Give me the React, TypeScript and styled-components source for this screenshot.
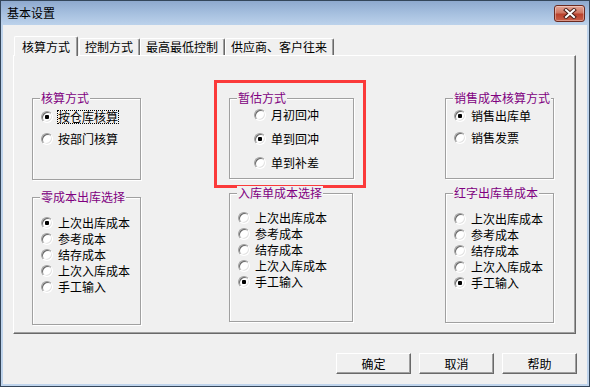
import React from 'react';
import styled, { createGlobalStyle } from 'styled-components';

interface Option {
  label: string;
  checked?: boolean;
  focused?: boolean;
}

interface GroupSpec {
  title: string;
  width: number;
  height: number;
  padLeft: number;
  top: number;
  gap: number;
  options: Option[];
}

const costOptions = (checked: number): Option[] =>
  ['上次出库成本', '参考成本', '结存成本', '上次入库成本', '手工输入'].map((label, i) => ({
    label,
    checked: i === checked,
  }));

const GlobalStyle = createGlobalStyle`
  html, body {
    margin: 0;
    padding: 0;
    background: #fff;
  }
  body {
    font-family: "Noto Sans CJK SC", "Noto Sans", sans-serif;
    font-size: 12px;
    color: #000;
  }
`;

const Window = styled.div`
  box-sizing: border-box;
  width: 590px;
  height: 387px;
  border: 1px solid #34465a;
  background: #bfd4ec;
  padding: 0 2px 2px 2px;
  display: flex;
  flex-direction: column;
`;

const TitleBar = styled.div`
  height: 24px;
  margin: 0 -2px;
  padding: 0 4px 0 6px;
  display: flex;
  align-items: flex-start;
  justify-content: space-between;
  background: linear-gradient(to bottom, #8ea9ce 0%, #a3bddd 45%, #bcd2eb 100%);
`;

const Title = styled.span`
  line-height: 24px;
  font-size: 12px;
  color: #000;
`;

const CloseButton = styled.div`
  box-sizing: border-box;
  width: 31px;
  height: 17px;
  margin-top: 4px;
  border: 1px solid #6b2a20;
  border-radius: 3px;
  background: linear-gradient(to bottom, #e3a596 0%, #cf7763 45%, #b9412c 55%, #c9604a 100%);
  box-shadow: inset 0 0 0 1px rgba(255, 255, 255, 0.35);
  display: flex;
  align-items: center;
  justify-content: center;
`;

const Body = styled.div`
  flex: 1;
  background: #f0f0f0;
  padding: 11px 10px 0 10px;
  display: flex;
  flex-direction: column;
`;

const TabStrip = styled.div`
  display: flex;
  align-items: flex-end;
  height: 19px;
  padding-left: 1px;
  position: relative;
  z-index: 1;
`;

const Tab = styled.div<{ $active?: boolean }>`
  box-sizing: border-box;
  height: ${({ $active }) => ($active ? 20 : 17)}px;
  padding: ${({ $active }) => ($active ? '0 7px' : '0 6px 0 5px')};
  margin-bottom: ${({ $active }) => ($active ? -1 : 0)}px;
  margin-right: ${({ $active }) => ($active ? 1 : 0)}px;
  border-top: 1px solid #fff;
  border-left: 1px solid #fff;
  border-right: 1px solid #696969;
  border-radius: 2px 2px 0 0;
  box-shadow: inset -1px 0 0 #a0a0a0;
  background: #f0f0f0;
  display: flex;
  align-items: center;
  line-height: 14px;
  white-space: nowrap;
`;

const Panel = styled.div`
  box-sizing: border-box;
  width: 563px;
  height: 279px;
  border-top: 1px solid #fff;
  border-left: 1px solid #fff;
  border-right: 1px solid #696969;
  border-bottom: 1px solid #696969;
  box-shadow: inset -1px -1px 0 #a0a0a0;
  padding-left: 18px;
  display: flex;
  align-items: flex-start;
`;

const Column = styled.div<{ $ml: number; $pt: number }>`
  display: flex;
  flex-direction: column;
  align-items: flex-start;
  flex-shrink: 0;
  margin-left: ${({ $ml }) => $ml}px;
  padding-top: ${({ $pt }) => $pt}px;
`;

const Highlight = styled.div`
  border: 3px solid #fb3a3a;
  padding: 15px 9px 6px 12px;
`;

const Group = styled.div<{ $w: number; $h: number; $mt?: number; $ml?: number }>`
  box-sizing: border-box;
  width: ${({ $w }) => $w}px;
  height: ${({ $h }) => $h}px;
  margin-top: ${({ $mt }) => $mt ?? 0}px;
  margin-left: ${({ $ml }) => $ml ?? 0}px;
  border: 1px solid #a0a0a0;
  box-shadow: 1px 1px 0 #fff, inset 1px 1px 0 #fff;
`;

const Legend = styled.div`
  display: table;
  margin: -8px 0 0 7px;
  padding: 0 1px;
  background: #f0f0f0;
  color: #800080;
  line-height: 14px;
  white-space: nowrap;
`;

const Options = styled.div<{ $pl: number; $mt: number; $gap: number }>`
  display: flex;
  flex-direction: column;
  padding-left: ${({ $pl }) => $pl}px;
  margin-top: ${({ $mt }) => $mt}px;
  gap: ${({ $gap }) => $gap}px;
`;

const OptionRow = styled.label`
  display: flex;
  align-items: center;
  height: 16px;
`;

const RadioMark = styled.span<{ $checked?: boolean }>`
  box-sizing: border-box;
  width: 12px;
  height: 12px;
  flex-shrink: 0;
  border-radius: 50%;
  border: 1px solid;
  border-color: #a0a0a0 #fff #fff #a0a0a0;
  box-shadow: inset 1px 1px 0 #696969, inset -1px -1px 0 #e3e3e3;
  background: #fff;
  display: flex;
  align-items: center;
  justify-content: center;

  &::after {
    content: '';
    display: ${({ $checked }) => ($checked ? 'block' : 'none')};
    width: 4px;
    height: 4px;
    border-radius: 1px;
    background: #000;
  }
`;

const OptionText = styled.span<{ $focused?: boolean }>`
  margin-left: 4px;
  border: 1px dotted ${({ $focused }) => ($focused ? '#000' : 'transparent')};
  line-height: 12px;
  white-space: nowrap;
`;

const ButtonBar = styled.div`
  display: flex;
  justify-content: flex-end;
  gap: 8px;
  width: 564px;
  margin-top: 19px;
`;

const Button = styled.button`
  box-sizing: border-box;
  width: 75px;
  height: 21px;
  padding: 0;
  font-family: inherit;
  font-size: 12px;
  color: #000;
  background: #f0f0f0;
  border: 1px solid;
  border-color: #fff #696969 #696969 #fff;
  box-shadow: inset -1px -1px 0 #a0a0a0;
`;

const RadioGroup: React.FC<{ spec: GroupSpec; mt?: number; ml?: number }> = ({ spec, mt, ml }) => (
  <Group $w={spec.width} $h={spec.height} $mt={mt} $ml={ml}>
    <Legend>{spec.title}</Legend>
    <Options $pl={spec.padLeft} $mt={spec.top} $gap={spec.gap}>
      {spec.options.map((o) => (
        <OptionRow key={o.label}>
          <RadioMark $checked={o.checked} />
          <OptionText $focused={o.focused}>{o.label}</OptionText>
        </OptionRow>
      ))}
    </Options>
  </Group>
);

const accounting: GroupSpec = {
  title: '核算方式', width: 109, height: 82, padLeft: 8, top: 4, gap: 6,
  options: [{ label: '按仓库核算', checked: true, focused: true }, { label: '按部门核算' }],
};

const estimate: GroupSpec = {
  title: '暂估方式', width: 125, height: 81, padLeft: 24, top: 2, gap: 8,
  options: [{ label: '月初回冲' }, { label: '单到回冲', checked: true }, { label: '单到补差' }],
};

const salesCost: GroupSpec = {
  title: '销售成本核算方式', width: 109, height: 81, padLeft: 8, top: 3, gap: 6,
  options: [{ label: '销售出库单', checked: true }, { label: '销售发票' }],
};

const zeroCost: GroupSpec = {
  title: '零成本出库选择', width: 109, height: 128, padLeft: 8, top: 11, gap: 0,
  options: costOptions(0),
};

const inboundCost: GroupSpec = {
  title: '入库单成本选择', width: 124, height: 129, padLeft: 8, top: 10, gap: 0,
  options: costOptions(4),
};

const redCost: GroupSpec = {
  title: '红字出库单成本', width: 109, height: 130, padLeft: 8, top: 11, gap: 0,
  options: costOptions(4),
};

const tabs = ['核算方式', '控制方式', '最高最低控制', '供应商、客户往来'];

const App: React.FC = () => (
  <>
    <GlobalStyle />
    <Window>
      <TitleBar>
        <Title>基本设置</Title>
        <CloseButton>
          <svg width="14" height="11" viewBox="0 0 14 11">
            <path d="M3 2 L11 9 M11 2 L3 9" stroke="#4a1f18" strokeWidth="4" strokeLinecap="square" />
            <path d="M3 2 L11 9 M11 2 L3 9" stroke="#fff" strokeWidth="2" strokeLinecap="square" />
          </svg>
        </CloseButton>
      </TitleBar>
      <Body>
        <TabStrip>
          {tabs.map((t, i) => (
            <Tab key={t} $active={i === 0}>{t}</Tab>
          ))}
        </TabStrip>
        <Panel>
          <Column $ml={0} $pt={42}>
            <RadioGroup spec={accounting} />
            <RadioGroup spec={zeroCost} mt={17} />
          </Column>
          <Column $ml={73} $pt={24}>
            <Highlight>
              <RadioGroup spec={estimate} />
            </Highlight>
            <RadioGroup spec={inboundCost} mt={5} ml={15} />
          </Column>
          <Column $ml={79} $pt={42}>
            <RadioGroup spec={salesCost} />
            <RadioGroup spec={redCost} mt={14} />
          </Column>
        </Panel>
        <ButtonBar>
          <Button>确定</Button>
          <Button>取消</Button>
          <Button>帮助</Button>
        </ButtonBar>
      </Body>
    </Window>
  </>
);

export default App;
